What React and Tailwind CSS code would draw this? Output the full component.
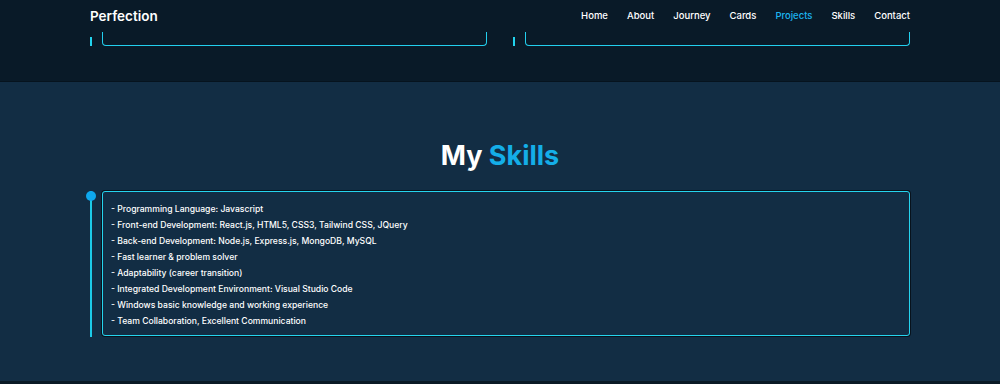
const links = ['Home', 'About', 'Journey', 'Cards', 'Projects', 'Skills', 'Contact'];

const skills = [
  '- Programming Language: Javascript',
  '- Front-end Development: React.js, HTML5, CSS3, Tailwind CSS, JQuery',
  '- Back-end Development: Node.js, Express.js, MongoDB, MySQL',
  '- Fast learner & problem solver',
  '- Adaptability (career transition)',
  '- Integrated Development Environment: Visual Studio Code',
  '- Windows basic knowledge and working experience',
  '- Team Collaboration, Excellent Communication',
];

const App = () => {
  return (
    <div className="w-[1000px] h-[384px] overflow-hidden bg-[#081a28] text-white font-['Inter',sans-serif]">
      <div className="h-[82px] bg-[#091a28] border-b border-[#06131e]">
        <div className="max-w-[820px] mx-auto flex justify-between items-center h-[32px]">
          <span className="text-[13.5px] font-semibold">Perfection</span>
          <nav className="flex gap-[19px] text-[9.5px] font-medium">
            {links.map((l) => (
              <span key={l} className={l === 'Projects' ? 'text-[#1cb4f0]' : 'text-white'}>
                {l}
              </span>
            ))}
          </nav>
        </div>
        <div className="max-w-[820px] mx-auto grid grid-cols-2 gap-[26px]">
          <div className="flex gap-[10px]">
            <div className="w-[2px] h-[9px] mt-[5px] bg-[#22d3ee]"></div>
            <div className="flex-1 h-[14px] border-x-[1.5px] border-b-[1.5px] border-[#22cfee] rounded-b-[4px]"></div>
          </div>
          <div className="flex gap-[10px]">
            <div className="w-[2px] h-[9px] mt-[5px] bg-[#22d3ee]"></div>
            <div className="flex-1 h-[14px] border-x-[1.5px] border-b-[1.5px] border-[#22cfee] rounded-b-[4px]"></div>
          </div>
        </div>
      </div>

      <div className="h-[299px] bg-[#122d44] pt-[57px]">
        <h2 className="text-center text-[27px] font-bold leading-[34px]">
          My <span className="text-[#14aee8]">Skills</span>
        </h2>
        <div className="max-w-[820px] mx-auto mt-[18px] flex gap-[10px]">
          <div className="relative w-[2px] bg-[#1ccbe8] mb-[-1px]">
            <div className="absolute left-[-4px] top-0 w-[10px] h-[10px] rounded-full bg-[#0ea8ee]"></div>
          </div>
          <div className="flex-1 border border-[#25d4ee] rounded-[3px] shadow-[0_0_0_1px_#08121c] px-[8px] pt-[9px] pb-[6px]">
            {skills.map((s) => (
              <p key={s} className="text-[8.6px] leading-[16px] font-medium">
                {s}
              </p>
            ))}
          </div>
        </div>
      </div>
      <div className="h-[3px] bg-[#0a1a26]"></div>
    </div>
  );
};

export default App;
